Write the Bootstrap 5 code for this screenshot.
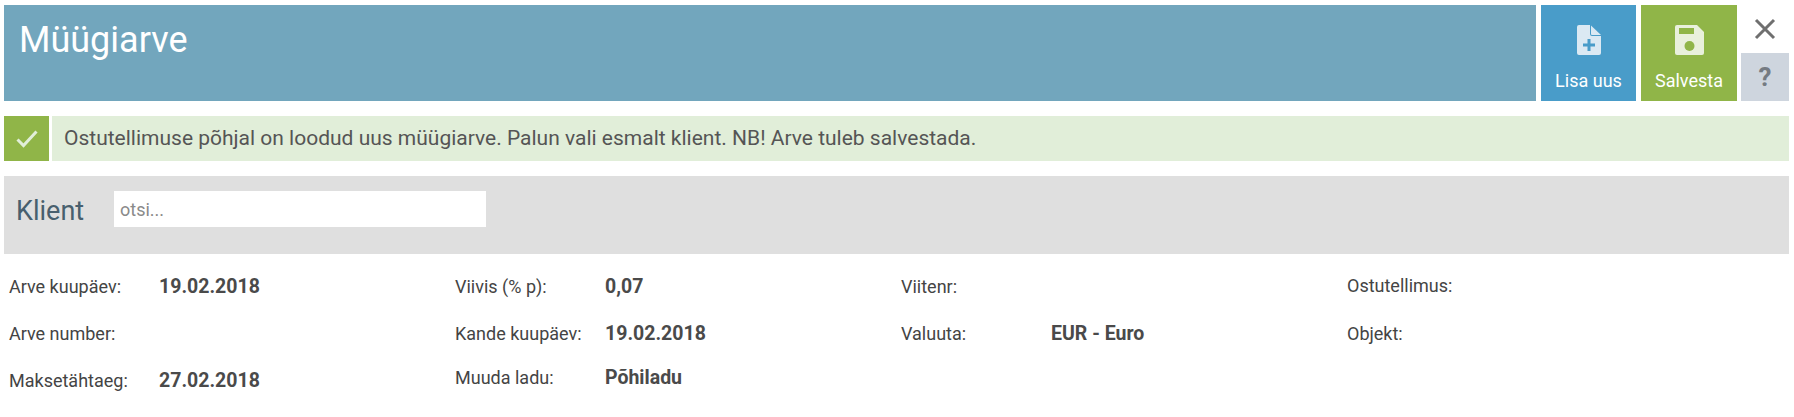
<!DOCTYPE html>
<html lang="et">
<head>
  <meta charset="UTF-8">
  <title>Müügiarve</title>
  <link href="https://cdn.jsdelivr.net/npm/bootstrap@5.3.0/dist/css/bootstrap.min.css" rel="stylesheet">
  <style>
    body { font-family: Roboto, "Liberation Sans", sans-serif; color: #4a4a4a; background: #fff; }
    .page-wrap { padding: 5px 5px 0 4px; }
    .head-bar { height: 96px; }
    .head-title { background: #72a6bd; color: #fff; font-size: 36px; line-height: 42px; padding: 14px 15px; margin-right: 5px; }
    .tile-btn { height: 96px; color: #fff; font-size: 18px; line-height: 20px; padding-top: 20px; margin-right: 5px; }
    .tile-btn svg { display: block; margin-bottom: 16px; }
    .tile-add { width: 95px; background: #499cc9; }
    .tile-save { width: 96px; background: #90b548; margin-right: 4px; }
    .side-btns { width: 48px; }
    .close-box { height: 48px; }
    .help-box { height: 48px; background: #ced5de; color: #757b82; font-size: 26px; font-weight: 700; }
    .note-row { margin-top: 15px; height: 45px; }
    .note-icon { width: 45px; background: #90b548; margin-right: 3px; }
    .note-text { background: #e1eed9; font-size: 21px; padding-left: 12px; color: #555; }
    .client-box { margin-top: 15px; height: 78px; background: #dfdfdf; padding: 15px 12px; }
    .client-name { font-size: 27px; line-height: 36px; color: #485f6e; width: 98px; margin-top: 2px; }
    .client-input { width: 372px; height: 36px; border: 0; padding: 0 6px; font-size: 18px; font-family: inherit; color: #777; }
    .client-input::placeholder { color: #8a8a8a; opacity: 1; }
    .info-cols { width: 1784px; margin-top: 21px; }
    .info-col { width: 446px; padding-left: 5px; }
    .info-col-high { margin-top: -1px; }
    .info-line { height: 24px; font-size: 18px; line-height: 24px; margin-bottom: 23px; }
    .info-line-wide { margin-bottom: 24px; }
    .info-line-short { margin-bottom: 22px; }
    .info-line-shorter { margin-bottom: 20px; }
    .info-lab { width: 150px; color: #444; }
    .info-val { font-size: 19.5px; font-weight: 700; color: #4a4a4a; }
  </style>
</head>
<body>

  <div class="page-wrap">
    <div class="d-flex head-bar">
      <div class="head-title flex-grow-1">Müügiarve</div>
      <div class="tile-btn tile-add d-flex flex-column align-items-center">
        <svg width="24" height="30" viewBox="0 0 24 30">
          <path d="M2 0H13V9a2 2 0 0 0 2 2H24V28a2 2 0 0 1-2 2H2a2 2 0 0 1-2-2V2a2 2 0 0 1 2-2Z" fill="#dbe9f3"/>
          <path d="M14 0.5 24 10H15a1 1 0 0 1-1-1Z" fill="#dbe9f3"/>
          <path d="M12 14V26M6 20H18" stroke="#499cc9" stroke-width="3"/>
        </svg>
        <span>Lisa uus</span>
      </div>
      <div class="tile-btn tile-save d-flex flex-column align-items-center">
        <svg width="29" height="30" viewBox="0 0 29 30">
          <path d="M2 0H22L29 7V28a2 2 0 0 1-2 2H2a2 2 0 0 1-2-2V2a2 2 0 0 1 2-2Z" fill="#e9f0dc"/>
          <rect x="4" y="3" width="15" height="6" fill="#90b548"/>
          <circle cx="14.5" cy="21" r="5" fill="#90b548"/>
        </svg>
        <span>Salvesta</span>
      </div>
      <div class="side-btns d-flex flex-column">
        <div class="close-box d-flex align-items-center justify-content-center">
          <svg width="24" height="24" viewBox="0 0 24 24"><path d="M3 3 21 21M21 3 3 21" stroke="#6f6f6f" stroke-width="3"/></svg>
        </div>
        <div class="help-box d-flex align-items-center justify-content-center">?</div>
      </div>
    </div>

    <div class="d-flex note-row">
      <div class="note-icon d-flex align-items-center justify-content-center">
        <svg width="22" height="18" viewBox="0 0 22 18"><path d="M1.5 9.5 7.5 15.5 20.5 1.5" fill="none" stroke="#e1eed9" stroke-width="3"/></svg>
      </div>
      <div class="note-text flex-grow-1 d-flex align-items-center">Ostutellimuse põhjal on loodud uus müügiarve. Palun vali esmalt klient. NB! Arve tuleb salvestada.</div>
    </div>

    <div class="client-box d-flex align-items-start">
      <div class="client-name">Klient</div>
      <input type="text" class="client-input" placeholder="otsi...">
    </div>

    <div class="d-flex info-cols">
      <div class="info-col">
        <div class="info-line d-flex"><span class="info-lab">Arve kuupäev:</span><span class="info-val">19.02.2018</span></div>
        <div class="info-line d-flex"><span class="info-lab">Arve number:</span></div>
        <div class="info-line d-flex"><span class="info-lab">Maksetähtaeg:</span><span class="info-val">27.02.2018</span></div>
      </div>
      <div class="info-col">
        <div class="info-line d-flex"><span class="info-lab">Viivis (% p):</span><span class="info-val">0,07</span></div>
        <div class="info-line info-line-shorter d-flex"><span class="info-lab">Kande kuupäev:</span><span class="info-val">19.02.2018</span></div>
        <div class="info-line d-flex"><span class="info-lab">Muuda ladu:</span><span class="info-val">Põhiladu</span></div>
      </div>
      <div class="info-col">
        <div class="info-line d-flex"><span class="info-lab">Viitenr:</span></div>
        <div class="info-line d-flex"><span class="info-lab">Valuuta:</span><span class="info-val">EUR - Euro</span></div>
      </div>
      <div class="info-col info-col-high">
        <div class="info-line info-line-wide d-flex"><span class="info-lab">Ostutellimus:</span></div>
        <div class="info-line d-flex"><span class="info-lab">Objekt:</span></div>
      </div>
    </div>
  </div>

  <script src="https://cdn.jsdelivr.net/npm/bootstrap@5.3.0/dist/js/bootstrap.bundle.min.js"></script>
</body>
</html>
